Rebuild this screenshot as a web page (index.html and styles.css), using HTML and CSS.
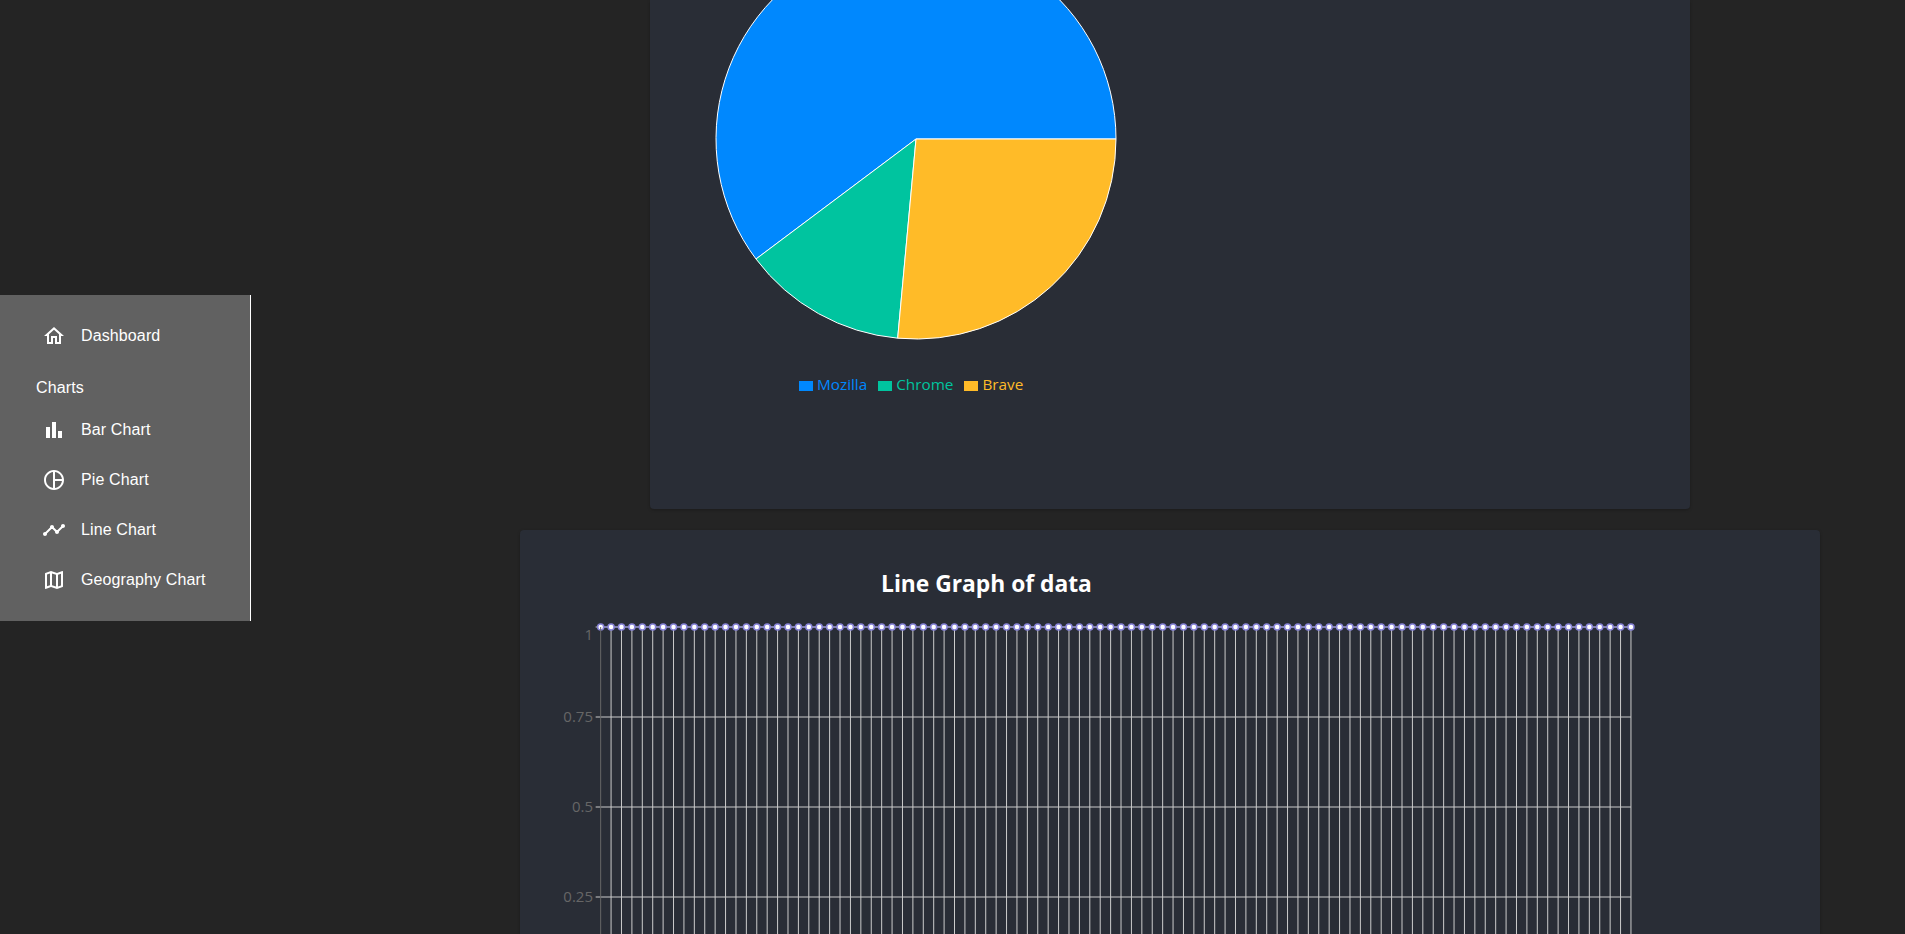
FILE: index.html
```html
<!DOCTYPE html>
<html lang="en">
<head>
<meta charset="utf-8">
<title>Charts</title>
<link rel="stylesheet" href="styles.css">
</head>
<body>
<nav class="sidebar">
  <a class="item"><svg class="icon" viewBox="0 0 24 24"><path d="m12 5.69 5 4.5V18h-2v-6H9v6H7v-7.81l5-4.5M12 3 2 12h3v8h6v-6h2v6h6v-8h3L12 3z"/></svg><span>Dashboard</span></a>
  <div class="group">Charts</div>
  <a class="item"><svg class="icon" viewBox="0 0 24 24"><path d="M4 9h4v11H4zm12 4h4v7h-4zm-6-9h4v16h-4z"/></svg><span>Bar Chart</span></a>
  <a class="item"><svg class="icon" viewBox="0 0 24 24"><path d="M12 2C6.49 2 2 6.49 2 12s4.49 10 10 10 10-4.49 10-10S17.51 2 12 2zm1 2.07c3.61.45 6.48 3.33 6.93 6.93H13V4.07zM4 12c0-4.06 3.07-7.44 7-7.93v15.87c-3.93-.5-7-3.88-7-7.94zm9 7.93V13h6.93c-.45 3.61-3.32 6.48-6.93 6.93z"/></svg><span>Pie Chart</span></a>
  <a class="item"><svg class="icon" viewBox="0 0 24 24"><path d="M23 8c0 1.1-.9 2-2 2-.18 0-.35-.02-.51-.07l-3.56 3.55c.05.16.07.34.07.52 0 1.1-.9 2-2 2s-2-.9-2-2c0-.18.02-.36.07-.52l-2.55-2.55c-.16.05-.34.07-.52.07s-.36-.02-.52-.07l-4.55 4.56c.05.16.07.33.07.51 0 1.1-.9 2-2 2s-2-.9-2-2 .9-2 2-2c.18 0 .35.02.51.07l4.56-4.55C8.02 9.36 8 9.18 8 9c0-1.1.9-2 2-2s2 .9 2 2c0 .18-.02.36-.07.52l2.55 2.55c.16-.05.34-.07.52-.07s.36.02.52.07l3.55-3.56C19.02 8.35 19 8.18 19 8c0-1.1.9-2 2-2s2 .9 2 2z"/></svg><span>Line Chart</span></a>
  <a class="item"><svg class="icon" viewBox="0 0 24 24"><path d="m20.5 3-.16.03L15 5.1 9 3 3.36 4.9c-.21.07-.36.25-.36.48V20.5c0 .28.22.5.5.5l.16-.03L9 18.9l6 2.1 5.64-1.9c.21-.07.36-.25.36-.48V3.5c0-.28-.22-.5-.5-.5zM10 5.47l4 1.4v11.66l-4-1.4V5.47zm-5 .99 3-1.01v11.7l-3 1.16V6.46zm14 11.08-3 1.01V6.86l3-1.16v11.84z"/></svg><span>Geography Chart</span></a>
</nav>
<main class="main">
  <section class="card card-pie">
    <svg class="pie" viewBox="-201 -139 402 340">
      <path class="slice blue" d="M0 0L200 0A200 200 0 1 0 -160 120Z"/>
      <path class="slice green" d="M0 0L-160 120A200 200 0 0 0 -18.3 199.2Z"/>
      <path class="slice yellow" d="M0 0L-18.3 199.2A200 200 0 0 0 200 0Z"/>
    </svg>
    <ul class="legend">
      <li class="legend-item text-blue"><i class="swatch bg-blue"></i>Mozilla</li>
      <li class="legend-item text-green"><i class="swatch bg-green"></i>Chrome</li>
      <li class="legend-item text-yellow"><i class="swatch bg-yellow"></i>Brave</li>
    </ul>
  </section>
  <section class="card card-line">
    <h2 class="chart-title">Line Graph of data</h2>
    <svg class="line-chart" id="line-chart" viewBox="0 0 1300 334"></svg>
  </section>
</main>
<script src="script.js"></script>
</body>
</html>
```
FILE: styles.css
```css
* { box-sizing: border-box; }
html, body { height: 934px; margin: 0; overflow: hidden; }
body {
  background: #242424;
  font-family: "Liberation Sans", Arial, sans-serif;
  color: #fff;
}
.sidebar {
  position: fixed;
  left: 0;
  top: 295px;
  width: 251px;
  height: 326px;
  padding-top: 16px;
  background: #616161;
  border-right: 1px solid #fff;
  font-size: 16px;
  letter-spacing: .12px;
}
.item {
  display: flex;
  align-items: center;
  height: 50px;
  padding-left: 42px;
  gap: 15px;
}
.icon { width: 24px; height: 24px; fill: #fff; flex: none; }
.group { padding: 17px 0 0 36px; height: 44px; line-height: 20px; }
.main {
  margin-left: 435px;
  display: flex;
  flex-direction: column;
  align-items: center;
  gap: 21px;
}
.card { background: #292d36; box-shadow: 0 1px 3px rgba(0,0,0,.25); }
.card-pie { width: 1040px; height: 509px; padding-left: 65px; border-radius: 0 0 4px 4px; }
.pie { display: block; width: 402px; height: 340px; }
.slice { stroke: #fff; stroke-width: 1; }
.blue { fill: #0088fe; }
.green { fill: #00c49f; }
.yellow { fill: #ffbb28; }
.legend {
  list-style: none;
  display: flex;
  gap: 11px;
  margin: 33px 0 0;
  padding: 0 0 0 84px;
  font-family: "Open Sans", sans-serif;
  font-size: 15.3px;
  line-height: 22px;
}
.legend-item { display: flex; align-items: center; gap: 4px; }
.swatch { width: 14px; height: 10px; margin-top: 4px; }
.bg-blue { background: #0088fe; }
.bg-green { background: #00c49f; }
.bg-yellow { background: #ffbb28; }
.text-blue { color: #0088fe; }
.text-green { color: #00c49f; }
.text-yellow { color: #ffbb28; }
.card-line { width: 1300px; height: 404px; padding-top: 39px; border-radius: 4px 4px 0 0; }
.chart-title {
  margin: 0;
  padding-left: 361px;
  font-family: "Open Sans", sans-serif;
  font-size: 22.8px;
  font-weight: 700;
  line-height: 30px;
}
.line-chart { display: block; width: 1300px; height: 334px; margin-top: 1px; }
.grid { stroke: #ccc; stroke-width: 1; fill: none; }
.axis { stroke: #666; stroke-width: 1; fill: none; }
.series { stroke: #8884d8; stroke-width: 1; fill: none; }
.dot { stroke: #8884d8; stroke-width: 1.5; fill: #fff; }
.tick { fill: #666; font-family: "Open Sans", sans-serif; font-size: 15px; text-anchor: end; }
```
FILE: script.js
```js
(function () {
  var NS = 'http://www.w3.org/2000/svg';
  var svg = document.getElementById('line-chart');
  var x0 = 80.67, step = 10.407, yTop = 27, band = 90, count = 100, bottom = 334;
  function add(tag, cls, attrs, text) {
    var el = document.createElementNS(NS, tag);
    el.setAttribute('class', cls);
    for (var k in attrs) el.setAttribute(k, attrs[k]);
    if (text) el.textContent = text;
    svg.appendChild(el);
  }
  var xEnd = x0 + step * (count - 1);
  [1, 0.75, 0.5, 0.25].forEach(function (v) {
    var y = yTop + (1 - v) * 4 * band;
    add('line', 'grid', { x1: x0 - 5, x2: xEnd, y1: y, y2: y });
  });
  for (var i = 1; i < count; i++) {
    var x = x0 + i * step;
    add('line', 'grid', { x1: x, x2: x, y1: yTop, y2: bottom });
  }
  [['1', yTop + 13], ['0.75', yTop + band + 5], ['0.5', yTop + 2 * band + 5], ['0.25', yTop + 3 * band + 5]].forEach(function (t) {
    add('text', 'tick', { x: 73, y: t[1] }, t[0]);
  });
  add('line', 'series', { x1: x0, x2: xEnd, y1: yTop, y2: yTop });
  for (var j = 0; j < count; j++) {
    add('circle', 'dot', { cx: x0 + j * step, cy: yTop, r: 3 });
  }
  add('line', 'axis', { x1: x0, x2: x0, y1: yTop, y2: bottom });
})();
```
